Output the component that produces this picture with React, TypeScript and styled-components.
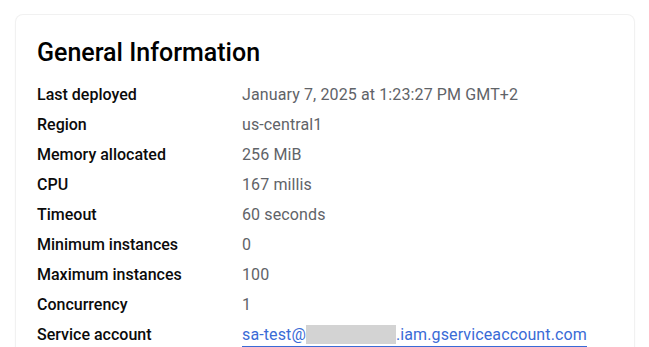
import React from 'react';
import styled, { createGlobalStyle } from 'styled-components';

const GlobalStyle = createGlobalStyle`
  html, body {
    margin: 0;
    padding: 0;
    background: #fff;
    font-family: Roboto, "Noto Sans", sans-serif;
  }
`;

interface IRow {
  label: string;
  value: React.ReactNode;
}

const rows: IRow[] = [
  { label: 'Last deployed', value: 'January 7, 2025 at 1:23:27 PM GMT+2' },
  { label: 'Region', value: 'us-central1' },
  { label: 'Memory allocated', value: '256 MiB' },
  { label: 'CPU', value: '167 millis' },
  { label: 'Timeout', value: '60 seconds' },
  { label: 'Minimum instances', value: '0' },
  { label: 'Maximum instances', value: '100' },
  { label: 'Concurrency', value: '1' },
];

export default function App() {
  return (
    <Page>
      <GlobalStyle />
      <Card>
        <Title>General Information</Title>
        <Grid>
          {rows.map(r => (
            <React.Fragment key={r.label}>
              <Label>{r.label}</Label>
              <Value>{r.value}</Value>
            </React.Fragment>
          ))}
          <Label>Service account</Label>
          <Value>
            <Link href="#">
              sa-test@<Redacted />.iam.gserviceaccount.com
            </Link>
          </Value>
        </Grid>
      </Card>
    </Page>
  );
}

const Page = styled.div`
  width: 649px;
  height: 347px;
  overflow: hidden;
  padding: 15px 15px 0 16px;
  box-sizing: border-box;
`;

const Card = styled.div`
  border-radius: 7px;
  background: #fff;
  box-shadow: 0 0 0 1px #f1f1f1, 0 1px 3px rgba(0, 0, 0, 0.06);
  padding: 22px 21px 40px;
  height: 400px;
  box-sizing: border-box;
`;

const Title = styled.h2`
  margin: 0 0 10px;
  font-size: 25px;
  font-weight: 500;
  line-height: 32px;
  color: #000;
`;

const Grid = styled.div`
  display: grid;
  grid-template-columns: 205px 1fr;
  grid-auto-rows: 30px;
  align-items: center;
`;

const Label = styled.div`
  font-size: 16px;
  font-weight: 500;
  color: #0b0b0b;
`;

const Value = styled.div`
  font-size: 16px;
  letter-spacing: 0.12px;
  color: #5f6368;
`;

const Link = styled.a`
  color: #3a6bd6;
  text-decoration: none;
  border-bottom: 1px solid #3a6bd6;
  padding-bottom: 2px;
`;

const Redacted = styled.span`
  display: inline-block;
  width: 90px;
  height: 19px;
  background: #d3d3d3;
  vertical-align: -4px;
`;
